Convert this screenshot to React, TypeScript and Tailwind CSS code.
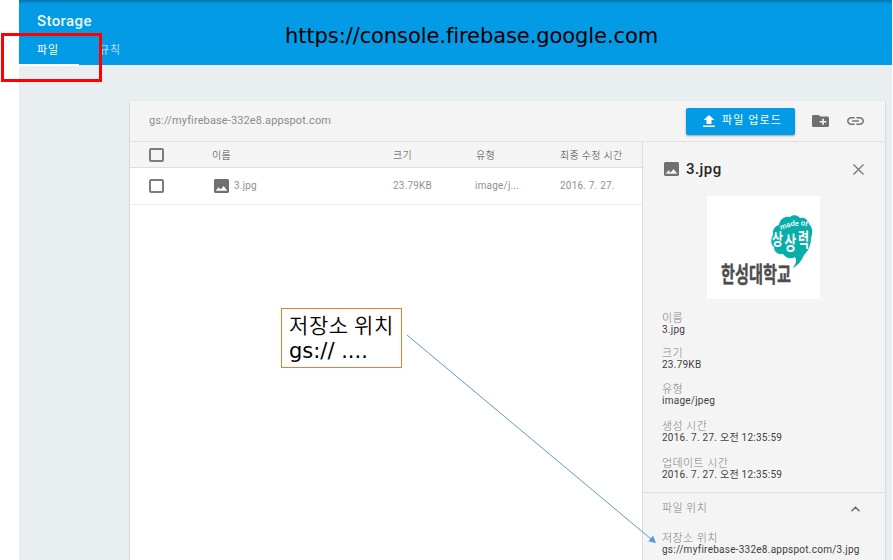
import React from 'react';

const ImageIcon = ({ className = '' }: { className?: string }) => (
  <svg viewBox="3 3 18 18" preserveAspectRatio="none" className={className} fill="#707070">
    <path d="M21 19V5c0-1.100-.9-2-2-2H5c-1.100 0-2 .9-2 2v14c0 1.100.9 2 2 2h14c1.100 0 2-.9 2-2zM8.500 13.500l2.500 3.010L14.500 12l4.500 6H5l3.500-4.500z" />
  </svg>
);

const Checkbox = () => <span className="block h-[14px] w-[15px] rounded-[2px] border-2 border-[#7c7c7c]" />;

const Field = ({ label, value, className = '' }: { label: string; value: string; className?: string }) => (
  <div className={className}>
    <div className="h-[12px] whitespace-nowrap text-[11px] font-light leading-[13px] tracking-[0.4px] text-[#808080]">{label}</div>
    <div className="h-[12px] whitespace-nowrap text-[10px] leading-[12px] tracking-[0.25px] text-[#404040]">{value}</div>
  </div>
);

const SchoolLogo = () => (
  <div className="mx-auto mt-[18px] h-[103px] w-[113px] shrink-0 -translate-x-px bg-white">
    <svg viewBox="0 0 113 103" className="h-full w-full">
      <path
        d="M72 29C73 22 79 20 83 21C86 18 91 19 93 22C98 21 101 24 102 28C106 32 106 37 104 42C104 50 101 55 97 59C94 66 90 70 86 72C89 67 90 65 88 61C83 64 78 61 76 58C70 59 67 55 67 51C63 48 64 42 66 39C65 34 68 30 72 29Z"
        fill="#08afa9"
      />
      <g fill="white" fontFamily="Roboto, sans-serif" fontWeight="500" fontSize="7.500">
        <text transform="translate(74 34) rotate(-20)">ma</text>
        <text x="83.500" y="29.500">de</text>
        <text transform="translate(93.500 29) rotate(12)">of</text>
      </g>
      <g fill="white" fontFamily="'Noto Sans CJK KR', sans-serif" fontWeight="700">
        <text transform="translate(65 49) scale(.85 1.150)" fontSize="14">상</text>
        <text transform="translate(77.500 54) scale(.85 1.250)" fontSize="15">상</text>
        <text transform="translate(91 51) scale(.8 1.250)" fontSize="15">력</text>
      </g>
      <text transform="translate(14 86) scale(.92 1.300)" fontSize="16.500" fontWeight="700" fontFamily="'Noto Sans CJK KR', sans-serif" fill="#4d4d50" textLength="76" stroke="#4d4d50" strokeWidth=".3">한성대학교</text>
    </svg>
  </div>
);

export default function App() {
  return (
    <div className="relative h-[560px] w-[893px] overflow-hidden bg-white pl-[19px] pr-px font-[Roboto,'Noto_Sans_CJK_KR',sans-serif]">
      <div className="flex h-full flex-col bg-[#e9eef1]">
        <header className="flex h-[65px] shrink-0 flex-col bg-[#039be5]">
          <div className="h-[4px] shrink-0 bg-linear-to-b from-[#0274ac] to-[#039be5]" />
          <div className="mt-[8px] pl-[18px] text-[15px] font-medium leading-[18px] tracking-[0.4px] text-white/95">Storage</div>
          <nav className="mt-[9px] flex h-[27px] shrink-0 text-[11px] leading-[22px] tracking-[0.9px]">
            <div className="w-[60px] border-b-2 border-white pl-[18px] pt-px text-white">파일</div>
            <div className="pl-[20px] pt-px text-white/70">규칙</div>
          </nav>
        </header>

        <section className="ml-[111px] mt-[36px] flex h-[500px] w-[755px] shrink-0 flex-col bg-[#f4f4f4] shadow-[0_1px_2px_rgba(0,0,0,0.24)]">
          <div className="flex h-[41px] shrink-0 items-center border-b border-[#e0e0e0] pl-[19px] pr-[21px]">
            <span className="pt-px text-[11px] tracking-[0.12px] text-[#8b8b8b]">gs://myfirebase-332e8.appspot.com</span>
            <button className="ml-auto flex h-[27px] w-[109px] items-center rounded-[2px] bg-[#039be5] pl-[17px] text-[11px] text-white shadow-[0_1px_2px_rgba(0,0,0,0.35)]">
              <svg viewBox="0 0 12 12" className="mr-[7px] h-[12px] w-[12px]" fill="white">
                <path d="M6 0L11.500 5H8.500V9H3.500V5H.5zM0 10.500H12V12H0z" />
              </svg>
              <span className="whitespace-nowrap pt-px tracking-[1.1px]">파일 업로드</span>
            </button>
            <svg viewBox="2 4 20 16" preserveAspectRatio="none" className="ml-[17px] h-[12px] w-[17px]" fill="#707070">
              <path d="M20 6h-8l-2-2H4c-1.100 0-2 .9-2 2v12c0 1.100.9 2 2 2h16c1.100 0 2-.9 2-2V8c0-1.100-.9-2-2-2zm-1 8h-3v3h-2v-3h-3v-2h3V9h2v3h3v2z" />
            </svg>
            <svg viewBox="2 7 20 10" preserveAspectRatio="none" className="ml-[18px] h-[8px] w-[17px]" fill="#777">
              <path d="M3.900 12c0-1.710 1.390-3.100 3.100-3.100h4V7H7c-2.760 0-5 2.240-5 5s2.240 5 5 5h4v-1.900H7c-1.710 0-3.100-1.390-3.100-3.100zM8 13h8v-2H8v2zm9-6h-4v1.900h4c1.710 0 3.100 1.390 3.100 3.100s-1.390 3.100-3.100 3.100h-4V17h4c2.760 0 5-2.240 5-5s-2.240-5-5-5z" />
            </svg>
          </div>

          <div className="flex min-h-0 flex-1">
            <main className="flex w-[512px] shrink-0 flex-col bg-white">
              <div className="grid h-[26px] shrink-0 grid-cols-[63px_181px_83px_84px_1fr] items-center whitespace-nowrap border-b border-[#dedede] bg-[#f4f4f4] pl-[19px] text-[10px] font-light tracking-[0.3px] text-[#444]">
                <Checkbox />
                <span className="pt-px">이름</span>
                <span className="pt-px">크기</span>
                <span className="pt-px">유형</span>
                <span className="pt-px">최종 수정 시간</span>
              </div>
              <div className="grid h-[37px] shrink-0 grid-cols-[64px_180px_82px_85px_1fr] items-center whitespace-nowrap border-b border-[#ededed] pl-[19px] text-[10px] leading-[14px] tracking-[0.2px] text-[#919191]">
                <Checkbox />
                <span className="flex items-center pl-px">
                  <ImageIcon className="mr-[5px] h-[14px] w-[15px]" />
                  <span className="pb-px">3.jpg</span>
                </span>
                <span className="pb-px">23.79KB</span>
                <span className="pb-px">image/j...</span>
                <span className="pb-px">2016. 7. 27.</span>
              </div>
            </main>

            <aside className="flex flex-1 flex-col border-l border-[#dcdcdc]">
              <div className="mt-[18px] flex h-[18px] shrink-0 items-center pl-[21px] pr-[21px]">
                <ImageIcon className="h-[14px] w-[15px]" />
                <span className="ml-[7px] text-[15px] font-medium leading-[18px] tracking-[0.45px] text-[#262626]">3.jpg</span>
                <svg viewBox="0 0 11 11" className="ml-auto h-[11px] w-[11px]" stroke="#757575" strokeWidth="1.3">
                  <path d="M.5 .5l10 10M10.500 .5l-10 10" />
                </svg>
              </div>
              <SchoolLogo />
              <div className="flex shrink-0 flex-col pl-[19px] pt-[13px]">
                <Field label="이름" value="3.jpg" />
                <Field className="mt-[11px]" label="크기" value="23.79KB" />
                <Field className="mt-[12px]" label="유형" value="image/jpeg" />
                <Field className="mt-[13px]" label="생성 시간" value="2016. 7. 27. 오전 12:35:59" />
                <Field className="mt-[13px]" label="업데이트 시간" value="2016. 7. 27. 오전 12:35:59" />
              </div>
              <div className="mt-[11px] flex h-[34px] shrink-0 items-center justify-between border-t border-[#dedede] pl-[19px] pr-[25px] text-[11px] font-light tracking-[0.4px] text-[#808080]">
                <span>파일 위치</span>
                <svg viewBox="0 0 9 6" className="mb-[2px] h-[6px] w-[9px]" fill="none" stroke="#666" strokeWidth="1.4">
                  <path d="M.5 5.300L4.500 1.200L8.500 5.300" />
                </svg>
              </div>
              <Field className="mt-[6px] pl-[19px]" label="저장소 위치" value="gs://myfirebase-332e8.appspot.com/3.jpg" />
            </aside>
          </div>
        </section>
      </div>

      <div className="absolute left-[285px] top-[23px] whitespace-nowrap font-['DejaVu_Sans',sans-serif] text-[21px] leading-[26px] tracking-[-0.08px] text-black">https://console.firebase.google.com</div>
      <div className="absolute left-px top-[33px] h-[49px] w-[101px] border-[3px] border-[#ff0000]" />
      <div className="absolute left-[281px] top-[308px] h-[60px] w-[121px] whitespace-nowrap border border-[#ed7d31] bg-white pl-[7px] pt-[3px] font-['DejaVu_Sans','Noto_Sans_CJK_KR',sans-serif] text-[21px] text-black">
        <div className="h-[27px] font-['Noto_Sans_CJK_KR',sans-serif] font-[350] leading-[25px] tracking-[0.6px]">저장소 위치</div>
        <div className="h-[25px] leading-[25px]">gs:// ....</div>
      </div>
      <svg className="pointer-events-none absolute left-[400px] top-[328px] h-[225px] w-[262px]" viewBox="400 328 262 225">
        <path d="M407 335L651 539" stroke="#5b9bd5" fill="none" />
        <path d="M656 543L648.500 541.500L653 535.500Z" fill="#5b9bd5" />
      </svg>
    </div>
  );
}
